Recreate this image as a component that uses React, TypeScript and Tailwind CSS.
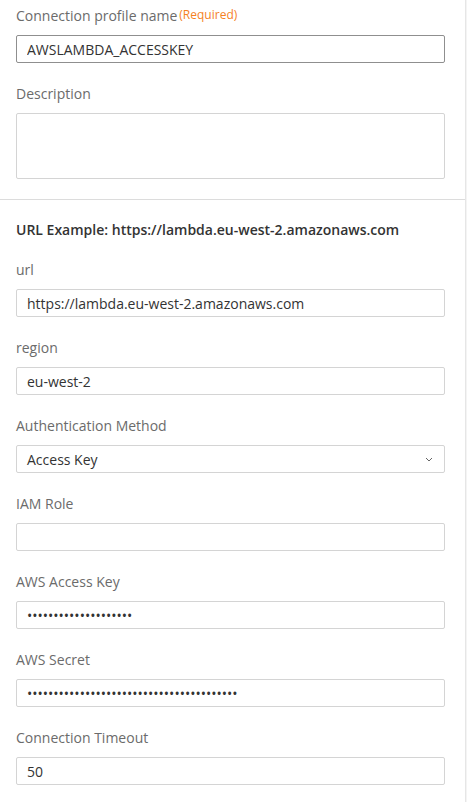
const fields = [
    { label: 'url', value: 'https://lambda.eu-west-2.amazonaws.com' },
    { label: 'region', value: 'eu-west-2' },
];

const secretFields = [
    { label: 'IAM Role', value: '', type: 'text' },
    { label: 'AWS Access Key', value: 'AKIAXXXXXXXXXXXXXXXX', type: 'password' },
    { label: 'AWS Secret', value: 'abcdefghijklmnopqrstuvwxyzABCDEFGHIJKLMN', type: 'password' },
    { label: 'Connection Timeout', value: '50', type: 'text' },
];

const inputBase =
    'mt-[10px] block h-[28px] w-full rounded-[2px] border bg-white px-[10px] text-[14px] text-[#333] outline-none';
const inputCls = inputBase + ' border-[#d4d4d4]';

const Label = ({ children }: { children: React.ReactNode }) => (
    <label className="flex h-5 items-center text-[14px] text-[#6b6b6b]">{children}</label>
);

const App = () => {
    return (
        <div className="flex min-h-[802px] w-[467px] bg-white font-['Open_Sans',sans-serif]">
            <div className="flex-1">
                {/* Profile */}
                <div className="px-4 pr-5 pt-[5px] pb-5">
                    <Label>
                        Connection profile name
                        <span className="ml-[2px] text-[12px] text-[#f5821f]">(Required)</span>
                    </Label>
                    <input className={inputBase + ' border-[#8f8f8f]'} defaultValue="AWSLAMBDA_ACCESSKEY" autoFocus />
                    <div className="mt-5">
                        <Label>Description</Label>
                    </div>
                    <textarea className="mt-[10px] block h-[66px] w-full resize-none rounded-[2px] border border-[#d4d4d4] bg-white outline-none" />
                </div>

                <div className="h-px bg-[#dcdcdc]" />

                {/* Connection settings */}
                <div className="px-4 pr-5 pt-[19px]">
                    <p className="mb-[1px] flex h-5 items-center text-[14px] font-semibold text-[#333]">
                        URL Example: https://lambda.eu-west-2.amazonaws.com
                    </p>
                    {fields.map((f) => (
                        <div key={f.label} className="mt-5">
                            <Label>{f.label}</Label>
                            <input className={inputCls} defaultValue={f.value} />
                        </div>
                    ))}
                    <div className="mt-5">
                        <Label>Authentication Method</Label>
                        <div className="relative mt-[10px] flex h-[28px] items-center rounded-[2px] border border-[#d4d4d4] px-[10px] text-[14px] text-[#333]">
                            Access Key
                            <svg className="absolute right-[11px] top-[11px]" width="8" height="5" viewBox="0 0 8 5" fill="none">
                                <path d="M1 1l3 3 3-3" stroke="#666" strokeWidth="1" />
                            </svg>
                        </div>
                    </div>
                    {secretFields.map((f) => (
                        <div key={f.label} className="mt-5">
                            <Label>{f.label}</Label>
                            <input type={f.type} className={inputCls} defaultValue={f.value} />
                        </div>
                    ))}
                </div>
            </div>
            <div className="w-[2px] border-l border-[#e6e6e6] bg-[#f4f4f4]" />
        </div>
    );
};

export default App;
